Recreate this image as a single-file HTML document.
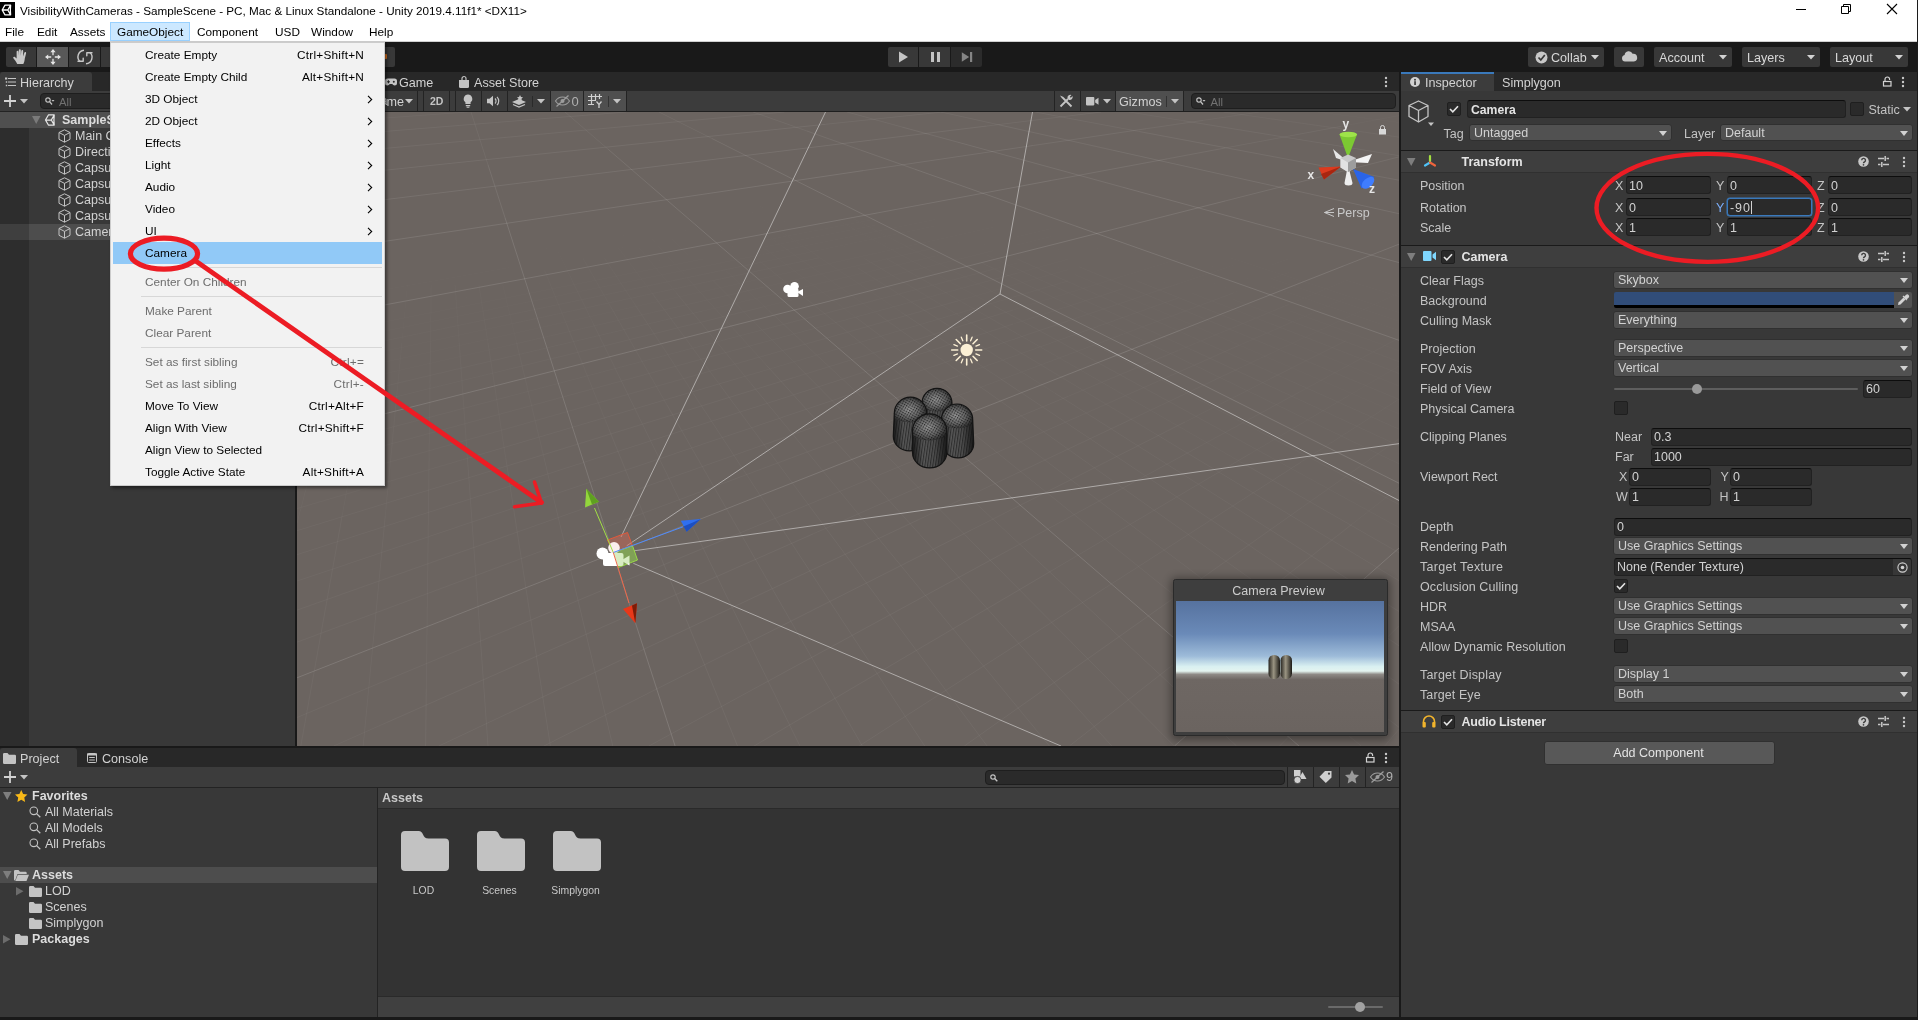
<!DOCTYPE html>
<html lang="en">
<head>
<meta charset="utf-8">
<title>Unity Editor</title>
<style>
*{box-sizing:border-box;margin:0;padding:0}
html,body{width:1918px;height:1020px;overflow:hidden;background:#383838}
body{position:relative;font-family:"Liberation Sans",sans-serif;font-size:12px;color:#d2d2d2;line-height:1}
.a{position:absolute}
.t{position:absolute;white-space:nowrap;line-height:16px;height:16px}
.w{font-family:"Liberation Sans",sans-serif;color:#000;font-size:12px}
.b{font-weight:bold}
.fld{position:absolute;background:#2a2a2a;border:1px solid #212121;border-top-color:#0d0d0d;border-radius:3px;height:18px}
.dd{position:absolute;background:#515151;border:1px solid #303030;border-radius:3px;height:18px}
.dd:after{content:"";position:absolute;right:4px;top:6px;border-left:4px solid transparent;border-right:4px solid transparent;border-top:5px solid #d2d2d2}
.ck{position:absolute;width:14px;height:14px;background:#2a2a2a;border:1px solid #1f1f1f;border-radius:2px}
.tb{position:absolute;background:#585858;border-radius:2px;height:20px;top:47px}
.sep{position:absolute;background:#232323;width:1px}
svg{position:absolute;overflow:visible}
</style>
</head>
<body>
<div id="root" style="position:absolute;left:0;top:0;width:1918px;height:1020px;will-change:transform">
<!-- ===== TITLE BAR ===== -->
<div class="a" id="titlebar" style="left:0;top:0;width:1918px;height:21px;background:#fff"></div>
<div class="a" style="left:0;top:2px;width:15px;height:16px;background:#000"></div>
<svg style="left:0;top:2px" width="15" height="16" viewBox="0 0 15 16"><path d="M10.60 12.85 5.00 12.85 2.20 8.00 5.00 3.15 10.60 3.15 10.32 8.00zM7.80 8.00L2.48 8.00M7.80 8.00L10.46 3.39M7.80 8.00L10.46 12.61" fill="none" stroke="#fff" stroke-width="1.3" stroke-linejoin="round"/></svg>
<div class="t w" style="left:20px;top:3px;font-size:11.7px">VisibilityWithCameras - SampleScene - PC, Mac &amp; Linux Standalone - Unity 2019.4.11f1* &lt;DX11&gt;</div>
<svg style="left:1790px;top:0" width="128" height="21" viewBox="0 0 128 21"><path d="M6 9.500h10" stroke="#000" stroke-width="1" fill="none"/><path d="M51.500 6.500h7v7h-7zM53.500 6.500v-2h7v7h-2" stroke="#000" stroke-width="1" fill="none"/><path d="M97 4l10 10M107 4l-10 10" stroke="#000" stroke-width="1.100" fill="none"/></svg>
<div class="a" id="menubar" style="left:0;top:21px;width:1918px;height:21px;background:#fff;border-bottom:1px solid #d0d0d0"></div>
<div class="a" style="left:110px;top:22px;width:80px;height:19px;background:#cce8ff;border:1px solid #99d1ff"></div>
<div class="t w" style="left:5px;top:23.6px;font-size:11.8px">File</div>
<div class="t w" style="left:37px;top:23.6px;font-size:11.8px">Edit</div>
<div class="t w" style="left:70px;top:23.6px;font-size:11.8px">Assets</div>
<div class="t w" style="left:117px;top:23.6px;font-size:11.8px">GameObject</div>
<div class="t w" style="left:197px;top:23.6px;font-size:11.8px">Component</div>
<div class="t w" style="left:275px;top:23.6px;font-size:11.8px">USD</div>
<div class="t w" style="left:311px;top:23.6px;font-size:11.8px">Window</div>
<div class="t w" style="left:369px;top:23.6px;font-size:11.8px">Help</div>
<!-- ===== MAIN TOOLBAR ===== -->
<div class="a" id="toolbar" style="left:0;top:42px;width:1918px;height:30px;background:#191919"></div>
<div class="tb" style="left:6px;width:30px;background:#383838;border-radius:2px 0 0 2px"></div>
<div class="tb" style="left:37px;width:31px;border-radius:0"></div>
<div class="tb" style="left:69px;width:31px;background:#383838;border-radius:0"></div>
<div class="tb" style="left:101px;width:31px;background:#383838;border-radius:0"></div>
<div class="tb" style="left:340px;width:55px;background:#383838"></div>
<div class="a" style="left:384px;top:54px;width:3px;height:5px;background:#d8701c;border-radius:1px"></div>
<!-- hand -->
<svg style="left:13px;top:49px" width="15" height="15" viewBox="0 0 15 15"><path d="M4.200 15C3 12.500 1.800 10.800.4 9.200-.3 8.300.9 7.200 1.900 8L3.600 9.600V2.800c0-1.300 1.800-1.300 1.900 0l.3 4V1.200c0-1.400 2-1.400 2 0V6.800l.5-4.900c.1-1.300 2-1.200 1.900.1L10 7.500l1.300-3.700c.4-1.200 2.100-.7 1.800.5L11.800 9.500c-.2 2.200-.6 3.800-1.500 5.500z" fill="#c8c8c8"/></svg>
<!-- move -->
<svg style="left:45px;top:49px" width="16" height="16" viewBox="0 0 16 16"><path d="M8 2v12M2 8h12" stroke="#e6e6e6" stroke-width="1.300" fill="none"/><path d="M8 0 10.600 3.200H5.400zM8 16 5.400 12.800h5.200zM0 8 3.200 5.400v5.200zM16 8 12.800 10.600V5.400z" fill="#e6e6e6"/><rect x="6.200" y="6.200" width="3.600" height="3.600" fill="#585858"/></svg>
<!-- rotate -->
<svg style="left:77px;top:49px" width="16" height="16" viewBox="0 0 16 16"><path d="M7 1.200A6.600 6.600 0 0 0 3.300 12.800M9 14.800A6.600 6.600 0 0 0 12.700 3.200" stroke="#c8c8c8" stroke-width="1.400" fill="none"/><path d="M1 12.200h5.200M6.200 12.200V9.200" stroke="#c8c8c8" stroke-width="1.400" fill="none" stroke-linecap="round"/><path d="M15 3.800H9.800M9.800 3.800V6.800" stroke="#c8c8c8" stroke-width="1.400" fill="none" stroke-linecap="round"/></svg>
<!-- play controls -->
<div class="tb" style="left:888px;width:30px;background:#383838;border-radius:2px 0 0 2px"></div>
<div class="tb" style="left:919px;width:31px;background:#383838;border-radius:0"></div>
<div class="tb" style="left:951px;width:31px;background:#2b2b2b;border-radius:0 2px 2px 0"></div>
<svg style="left:889px;top:47px" width="94" height="20" viewBox="0 0 94 20"><path d="M10 4.500v11l9-5.500z" fill="#c4c4c4"/><path d="M42 5h3v10h-3zM48 5h3v10h-3z" fill="#c4c4c4"/><path d="M72.800 5.200v9.600l7.400-4.800z" fill="#858585"/><path d="M81 5h2.200v10H81z" fill="#858585"/></svg>
<!-- right buttons -->
<div class="tb" style="left:1528px;width:76px;background:#383838"></div>
<div class="tb" style="left:1614px;width:30px;background:#383838"></div>
<div class="tb" style="left:1654px;width:78px;background:#383838"></div>
<div class="tb" style="left:1742px;width:78px;background:#383838"></div>
<div class="tb" style="left:1830px;width:78px;background:#383838"></div>
<svg style="left:1535px;top:51px" width="13" height="13" viewBox="0 0 13 13"><circle cx="6.500" cy="6.500" r="6" fill="#c8c8c8"/><path d="M3.500 6.500 5.800 9 9.800 4" stroke="#383838" stroke-width="1.700" fill="none"/></svg>
<div class="t" style="left:1551px;top:50px;font-size:12.6px;color:#d8d8d8">Collab</div>
<svg style="left:1591px;top:55px" width="9" height="5" viewBox="0 0 9 5"><path d="M0 0h8L4 4.500z" fill="#d2d2d2"/></svg>
<svg style="left:1621px;top:50px" width="17" height="13" viewBox="0 0 17 13"><path d="M4 11.500a3.300 3.300 0 0 1-.4-6.500 4.200 4.200 0 0 1 8-1.200 3.900 3.900 0 0 1 1.300 7.700z" fill="#c8c8c8"/></svg>
<div class="t" style="left:1659px;top:50px;font-size:12.6px;color:#d8d8d8">Account</div>
<svg style="left:1719px;top:55px" width="9" height="5" viewBox="0 0 9 5"><path d="M0 0h8L4 4.500z" fill="#d2d2d2"/></svg>
<div class="t" style="left:1747px;top:50px;font-size:12.6px;color:#d8d8d8">Layers</div>
<svg style="left:1807px;top:55px" width="9" height="5" viewBox="0 0 9 5"><path d="M0 0h8L4 4.500z" fill="#d2d2d2"/></svg>
<div class="t" style="left:1835px;top:50px;font-size:12.6px;color:#d8d8d8">Layout</div>
<svg style="left:1895px;top:55px" width="9" height="5" viewBox="0 0 9 5"><path d="M0 0h8L4 4.500z" fill="#d2d2d2"/></svg>
<!-- ===== HIERARCHY ===== -->
<div class="a" id="hier" style="left:0;top:72px;width:295px;height:674px;background:#383838"></div>
<div class="a" style="left:0;top:72px;width:295px;height:19px;background:#282828"></div>
<div class="a" style="left:0;top:72px;width:92px;height:19px;background:#3c3c3c;border-radius:3px 3px 0 0"></div>
<svg style="left:5px;top:77px" width="11" height="10" viewBox="0 0 11 10"><path d="M3 1.500h8M3 5h8M3 8.500h8" stroke="#c4c4c4" stroke-width="1.200" fill="none"/><path d="M0 .5h2.200v2H0zM.8 4.200h1.400v1.600H.8zM.8 7.700h1.400v1.600H.8z" fill="#c4c4c4"/></svg>
<div class="t" style="left:20px;top:75px;font-size:12.6px">Hierarchy</div>
<div class="a" style="left:0;top:91px;width:295px;height:20px;background:#3c3c3c"></div>
<div class="a" style="left:0;top:111px;width:295px;height:1px;background:#232323"></div>
<svg style="left:4px;top:95px" width="26" height="12" viewBox="0 0 26 12"><path d="M6 0v12M0 6h12" stroke="#d2d2d2" stroke-width="1.800" fill="none"/><path d="M16 4h8l-4 4.500z" fill="#c4c4c4"/></svg>
<div class="a" style="left:40px;top:93px;width:250px;height:16px;background:#2a2a2a;border:1px solid #1e1e1e;border-radius:4px"></div>
<svg style="left:45px;top:97px" width="10" height="9" viewBox="0 0 10 9"><circle cx="3" cy="3" r="2.200" stroke="#c4c4c4" stroke-width="1.200" fill="none"/><path d="M4.600 4.600 7 7.500" stroke="#c4c4c4" stroke-width="1.300"/><path d="M6.500 3h3l-1.500 1.800z" fill="#c4c4c4"/></svg>
<div class="t" style="left:59px;top:93.700px;font-size:11.300px;color:#727272">All</div>
<div class="a" style="left:0;top:128px;width:29px;height:618px;background:#2d2d2d"></div>
<div class="a" style="left:0;top:112px;width:295px;height:16px;background:#4f4f4f"></div>
<div class="a" style="left:0;top:224px;width:29px;height:16px;background:#3f3f3f"></div>
<div class="a" style="left:29px;top:224px;width:266px;height:16px;background:#4d4d4d"></div>
<svg style="left:32px;top:116px" width="9" height="8" viewBox="0 0 9 8"><path d="M0 0h8.500L4.200 8z" fill="#7a7a7a"/></svg>
<svg style="left:44px;top:113px" width="14" height="14" viewBox="0 0 14 14"><path d="M10.20 12.02 4.40 12.02 1.50 7.00 4.40 1.98 10.20 1.98 9.91 7.00zM7.30 7.00L1.79 7.00M7.30 7.00L10.05 2.23M7.30 7.00L10.05 11.77" fill="none" stroke="#e6e6e6" stroke-width="1.25" stroke-linejoin="round"/></svg>
<div class="t b" style="left:62px;top:112px;font-size:12.500px;color:#dcdcdc">SampleScene</div>
<svg style="left:58px;top:129px" width="13" height="14" viewBox="0 0 13 14"><path d="M6.500.8 12 3.500v6.800L6.500 13.200 1 10.300V3.500z M1 3.500 6.500 6.400 12 3.500M6.500 6.400v6.800" stroke="#c4c4c4" stroke-width="1" fill="none" stroke-linejoin="round"/></svg>
<div class="t" style="left:75px;top:128px;font-size:12.500px">Main Camera</div>
<svg style="left:58px;top:145px" width="13" height="14" viewBox="0 0 13 14"><path d="M6.500.8 12 3.500v6.800L6.500 13.200 1 10.300V3.500z M1 3.500 6.500 6.400 12 3.500M6.500 6.400v6.800" stroke="#c4c4c4" stroke-width="1" fill="none" stroke-linejoin="round"/></svg>
<div class="t" style="left:75px;top:144px;font-size:12.500px">Directional Light</div>
<svg style="left:58px;top:161px" width="13" height="14" viewBox="0 0 13 14"><path d="M6.500.8 12 3.500v6.800L6.500 13.200 1 10.300V3.500z M1 3.500 6.500 6.400 12 3.500M6.500 6.400v6.800" stroke="#c4c4c4" stroke-width="1" fill="none" stroke-linejoin="round"/></svg>
<div class="t" style="left:75px;top:160px;font-size:12.500px">Capsule</div>
<svg style="left:58px;top:177px" width="13" height="14" viewBox="0 0 13 14"><path d="M6.500.8 12 3.500v6.800L6.500 13.200 1 10.300V3.500z M1 3.500 6.500 6.400 12 3.500M6.500 6.400v6.800" stroke="#c4c4c4" stroke-width="1" fill="none" stroke-linejoin="round"/></svg>
<div class="t" style="left:75px;top:176px;font-size:12.500px">Capsule</div>
<svg style="left:58px;top:193px" width="13" height="14" viewBox="0 0 13 14"><path d="M6.500.8 12 3.500v6.800L6.500 13.200 1 10.300V3.500z M1 3.500 6.500 6.400 12 3.500M6.500 6.400v6.800" stroke="#c4c4c4" stroke-width="1" fill="none" stroke-linejoin="round"/></svg>
<div class="t" style="left:75px;top:192px;font-size:12.500px">Capsule</div>
<svg style="left:58px;top:209px" width="13" height="14" viewBox="0 0 13 14"><path d="M6.500.8 12 3.500v6.800L6.500 13.200 1 10.300V3.500z M1 3.500 6.500 6.400 12 3.500M6.500 6.400v6.800" stroke="#c4c4c4" stroke-width="1" fill="none" stroke-linejoin="round"/></svg>
<div class="t" style="left:75px;top:208px;font-size:12.500px">Capsule</div>
<svg style="left:58px;top:225px" width="13" height="14" viewBox="0 0 13 14"><path d="M6.500.8 12 3.500v6.800L6.500 13.200 1 10.300V3.500z M1 3.500 6.500 6.400 12 3.500M6.500 6.400v6.800" stroke="#c4c4c4" stroke-width="1" fill="none" stroke-linejoin="round"/></svg>
<div class="t" style="left:75px;top:224px;font-size:12.500px">Camera</div>
<!-- ===== SCENE ===== -->
<div class="a" id="scene" style="left:297px;top:72px;width:1102px;height:674px;background:#6b6460"></div>
<div class="a" style="left:297px;top:72px;width:1102px;height:19px;background:#282828"></div>
<div class="a" style="left:297px;top:72px;width:82px;height:19px;background:#3c3c3c;border-radius:3px 3px 0 0"></div>
<div class="a" style="left:297px;top:91px;width:1102px;height:20px;background:#3c3c3c"></div>
<div class="a" style="left:297px;top:111px;width:1102px;height:1px;background:#1f1f1f"></div>
<div class="t" style="left:316px;top:75px;font-size:12.6px">Scene</div>
<svg style="left:385px;top:77px" width="12" height="10" viewBox="0 0 12 10"><path d="M2.500 1.500h7a2.500 2.500 0 0 1 2.500 2.500v2a2.500 2.500 0 0 1-2.500 2.500c-1 0-1.500-1-2.300-1.500h-2.400c-.8.500-1.300 1.500-2.300 1.500A2.500 2.500 0 0 1 0 6V4a2.500 2.500 0 0 1 2.500-2.500z" fill="#c4c4c4"/><circle cx="8.800" cy="4.800" r="1" fill="#282828"/><path d="M2 4.800h3M3.500 3.300v3" stroke="#282828" stroke-width="1"/></svg>
<div class="t" style="left:399px;top:75px;font-size:12.6px">Game</div>
<svg style="left:459px;top:76px" width="10" height="12" viewBox="0 0 10 12"><path d="M0 4h10v6.500a1.500 1.500 0 0 1-1.500 1.500h-7A1.500 1.500 0 0 1 0 10.500z" fill="#c4c4c4"/><path d="M3 4V2.500a2 2 0 0 1 4 0V4" stroke="#c4c4c4" stroke-width="1.200" fill="none"/></svg>
<div class="t" style="left:474px;top:75px;font-size:12.6px">Asset Store</div>
<svg style="left:1384px;top:76px" width="4" height="12" viewBox="0 0 4 12"><circle cx="2" cy="2" r="1.200" fill="#c4c4c4"/><circle cx="2" cy="6" r="1.200" fill="#c4c4c4"/><circle cx="2" cy="10" r="1.200" fill="#c4c4c4"/></svg>
<!-- scene toolbar -->
<div class="t" style="left:300px;top:93px;font-size:12.6px">Shaded Wirefra</div>
<div class="t" style="left:386.400px;top:94px;font-size:12.6px">me</div>
<svg style="left:405px;top:99px" width="8" height="5" viewBox="0 0 8 5"><path d="M0 0h8L4 4.500z" fill="#c4c4c4"/></svg>
<div class="sep" style="left:417px;top:91px;height:20px"></div><div class="sep" style="left:423px;top:91px;height:20px"></div>
<div class="t b" style="left:430px;top:93px;font-size:10.500px;color:#c4c4c4">2D</div>
<div class="sep" style="left:449px;top:91px;height:20px"></div><div class="sep" style="left:455px;top:91px;height:20px"></div>
<svg style="left:463px;top:94px" width="10" height="14" viewBox="0 0 10 14"><path d="M5 .5a4.300 4.300 0 0 1 2.600 7.700V10H2.400V8.200A4.300 4.300 0 0 1 5 .5z" fill="#c4c4c4"/><path d="M2.800 11h4.400v1.200H2.800zM3.600 12.800h2.800v.9H3.600z" fill="#c4c4c4"/></svg>
<div class="sep" style="left:481px;top:91px;height:20px"></div>
<svg style="left:487px;top:95px" width="14" height="12" viewBox="0 0 14 12"><path d="M0 3.800h2.500L6 .8v10.400L2.500 8.200H0z" fill="#c4c4c4"/><path d="M8 3.500a3.500 3.500 0 0 1 0 5M10 1.800a6 6 0 0 1 0 8.400" stroke="#c4c4c4" stroke-width="1.200" fill="none"/></svg>
<div class="sep" style="left:507px;top:91px;height:20px"></div>
<svg style="left:512px;top:95px" width="14" height="12" viewBox="0 0 14 12"><path d="M0 7l7-3 7 3-7 3z" fill="#c4c4c4"/><path d="M1 9.500 7 12l6-2.500" stroke="#c4c4c4" stroke-width="1.200" fill="none"/><path d="M8 0l1 2 2 .3-1.500 1.400.4 2.100L8 4.800 6.100 5.800l.4-2.100L5 2.300 7 2z" fill="#c4c4c4"/></svg>
<div class="sep" style="left:532px;top:96px;height:11px;background:#2a2a2a"></div><svg style="left:537px;top:99px" width="8" height="5" viewBox="0 0 8 5"><path d="M0 0h8L4 4.500z" fill="#c4c4c4"/></svg>
<div class="sep" style="left:550px;top:91px;height:20px"></div>
<div class="a" style="left:551px;top:91px;width:32px;height:20px;background:#4f4f4f"></div>
<svg style="left:555px;top:95px" width="15" height="12" viewBox="0 0 15 12"><path d="M.5 6C2.500 2.800 5 2 7.500 2S12.500 2.800 14.500 6C12.500 9.200 10 10 7.500 10S2.500 9.200.5 6z" stroke="#9c9c9c" stroke-width="1.200" fill="none"/><circle cx="7.500" cy="6" r="2" fill="#9c9c9c"/><path d="M1.500 11.500 13.500.5" stroke="#9c9c9c" stroke-width="1.300"/></svg>
<div class="t" style="left:571.500px;top:93.500px;font-size:13px;color:#b0b0b0">0</div>
<div class="sep" style="left:583px;top:91px;height:20px"></div>
<div class="a" style="left:584px;top:91px;width:42px;height:20px;background:#4f4f4f"></div>
<svg style="left:588px;top:94px" width="15" height="14" viewBox="0 0 15 14"><path d="M3.500 0v11M7.500 0v6M11.500 0v5M0 2.500h14M0 6.500h8M0 10.500h6" stroke="#d0d0d0" stroke-width="1.200" fill="none"/><path d="M8.500 7.500 11 10.500 13.500 7.500M11 10.500V14" stroke="#d0d0d0" stroke-width="1.300" fill="none"/></svg>
<div class="sep" style="left:608px;top:96px;height:11px;background:#333"></div>
<svg style="left:613px;top:99px" width="8" height="5" viewBox="0 0 8 5"><path d="M0 0h8L4 4.500z" fill="#c4c4c4"/></svg>
<div class="sep" style="left:626px;top:91px;height:20px"></div>
<div class="sep" style="left:1054px;top:91px;height:20px"></div>
<svg style="left:1059px;top:94px" width="14" height="14" viewBox="0 0 14 14"><path d="M1.500 12.500 9 5M12.500 12.500 4 4" stroke="#c4c4c4" stroke-width="1.800" fill="none"/><path d="M1 1.500 4.500 3 5 5 3 4.500z" fill="#c4c4c4"/><path d="M8.500 4.500a3 3 0 0 1 4-3.500L10.800 2.700l1 1L13.500 2a3 3 0 0 1-3.500 4z" fill="#c4c4c4"/></svg>
<div class="sep" style="left:1080px;top:91px;height:20px"></div>
<svg style="left:1086px;top:97px" width="12.500" height="8.500" viewBox="0 0 15 10"><rect x="0" y="0" width="10" height="10" rx="1" fill="#c4c4c4"/><path d="M11 3.500 15 .8v8.400L11 6.500z" fill="#c4c4c4"/></svg>
<svg style="left:1103px;top:99px" width="8" height="5" viewBox="0 0 8 5"><path d="M0 0h8L4 4.500z" fill="#c4c4c4"/></svg>
<div class="sep" style="left:1115px;top:91px;height:20px"></div>
<div class="a" style="left:1116px;top:91px;width:67px;height:20px;background:#4f4f4f"></div>
<div class="t" style="left:1119px;top:94px;font-size:12.6px">Gizmos</div>
<div class="sep" style="left:1166px;top:96px;height:11px;background:#333"></div>
<svg style="left:1171px;top:99px" width="8" height="5" viewBox="0 0 8 5"><path d="M0 0h8L4 4.500z" fill="#c4c4c4"/></svg>
<div class="sep" style="left:1183px;top:91px;height:20px"></div>
<div class="a" style="left:1191px;top:93px;width:205px;height:16px;background:#2a2a2a;border:1px solid #1e1e1e;border-radius:4px"></div>
<svg style="left:1196px;top:97px" width="10" height="9" viewBox="0 0 10 9"><circle cx="3" cy="3" r="2.200" stroke="#c4c4c4" stroke-width="1.200" fill="none"/><path d="M4.600 4.600 7 7.500" stroke="#c4c4c4" stroke-width="1.300"/><path d="M6.500 3h3l-1.500 1.800z" fill="#c4c4c4"/></svg>
<div class="t" style="left:1210.500px;top:93.700px;font-size:11.300px;color:#727272">All</div>
<!-- scene viewport drawing -->
<svg id="vp" style="left:297px;top:112px;overflow:hidden" width="1102" height="634" viewBox="297 112 1102 634">
<g id="grid" fill="none" stroke="#fff" stroke-width="1"><path stroke-opacity="0.008" d="M1344.6 279.7L1399.0 296.5M1288.4 269.3L1399.0 304.3M649.6 231.1L355.8 280.7M1230.5 257.9L1399.0 312.6M749.0 219.5L297.0 297.8M1190.0 251.5L1399.0 321.3M755.7 223.9L297.0 305.2M1133.8 239.5L1399.0 330.5M819.0 218.1L297.0 313.0M1071.3 231.4L1289.8 310.9M877.0 218.8L297.0 330.0M1066.6 236.9L1232.8 299.3M877.0 224.8L703.0 259.1M355.0 327.7L297.0 339.1M1036.0 232.7L1191.6 293.0M935.0 219.5L761.0 254.8M978.4 217.4L1136.1 280.6M935.0 226.0L819.0 250.2M972.6 222.5L1079.2 266.8M993.0 220.4L819.0 257.8M966.8 228.1L1074.8 274.5M993.0 227.3L877.0 253.0M906.2 209.6L1015.7 258.4M1051.0 221.3L935.0 247.9M935.4 231.2L986.9 255.1M1051.0 228.7L935.0 256.1M877.2 212.5L981.5 262.8M1051.0 236.6L993.0 250.8M849.5 216.6L899.4 242.8M1109.0 238.9L993.0 269.4M842.6 222.8L893.1 250.5M1123.5 244.1L1068.4 259.2M835.7 229.6L886.9 258.9M1178.6 238.3L1068.4 269.5M815.8 229.2L864.4 258.5M1178.6 248.2L1068.4 280.8M759.6 205.7L857.9 268.1M1178.6 259.0L1123.5 276.0M751.9 212.1L801.7 245.4M1233.7 253.0L1123.5 288.5M735.4 213.0L782.8 246.6M1233.7 265.1L1178.6 283.7M719.7 214.6L765.0 248.7M1288.8 258.8L1178.6 297.8M713.3 223.9L759.6 261.2M1288.8 272.4L1233.7 292.9M683.3 230.9L725.8 270.5M1343.9 281.5L1288.8 304.4M671.8 238.8L713.7 281.1M1345.7 298.2L1292.5 321.8M651.8 238.8L690.1 281.1M1399.0 292.9L1345.7 318.1M1399.0 313.8L1345.6 340.8M541.5 217.7L567.3 270.5M489.0 227.3L502.8 284.9M470.0 227.3L478.9 284.9M407.4 284.9L401.9 342.5M383.5 284.9L373.2 342.5M364.6 266.2L351.1 317.7M329.9 302.0L313.5 349.5M319.3 267.8L297.0 319.7"/><path stroke-opacity="0.017" d="M1289.8 310.9L1399.0 350.7M1232.8 299.3L1399.0 361.7M703.0 259.1L355.0 327.7M1191.6 293.0L1399.0 373.5M761.0 254.8L297.0 348.8M1136.1 280.6L1399.0 386.0M819.0 250.2L297.0 359.1M1079.2 266.8L1399.0 399.4M819.0 257.8L297.0 369.9M1074.8 274.5L1399.0 413.8M877.0 253.0L297.0 381.5M1015.7 258.4L1289.5 380.4M935.0 247.9L297.0 393.8M986.9 255.1L1193.0 350.4M935.0 256.1L703.0 311.0M355.0 393.2L297.0 406.9M981.5 262.8L1138.1 338.1M993.0 250.8L761.0 307.5M899.4 242.8L1049.3 321.3M993.0 269.4L877.0 299.8M893.1 250.5L994.3 305.9M1068.4 259.2L903.1 304.2M886.9 258.9L989.3 317.7M1068.4 269.5L958.2 300.8M864.4 258.5L961.6 317.1M1068.4 280.8L958.2 313.3M857.9 268.1L907.1 299.3M1123.5 276.0L1013.3 309.9M801.7 245.4L901.3 312.2M1123.5 288.5L1013.3 324.0M782.8 246.6L877.6 313.9M1178.6 283.7L1068.4 320.8M765.0 248.7L855.5 317.1M1178.6 297.8L1123.5 317.3M759.6 261.2L805.9 298.5M1233.7 292.9L1123.5 334.0M725.8 270.5L768.4 310.1M1288.8 304.4L1178.6 350.3M713.7 281.1L755.5 323.3M1292.5 321.8L1239.2 345.3M690.1 281.1L728.5 323.3M1345.7 318.1L1239.0 368.4M639.3 247.9L676.5 293.1M1345.6 340.8L1292.1 367.8M618.5 247.9L652.0 293.1M1399.0 337.9L1299.0 392.3M604.6 258.3L636.6 307.1M1399.0 366.0L1349.4 395.2M583.0 258.3L610.9 307.1M567.3 270.5L593.1 323.3M544.7 270.5L566.1 323.3M502.8 284.9L516.5 342.5M478.9 284.9L487.9 342.5M455.1 284.9L459.2 342.5M431.2 284.9L430.5 342.5M401.9 342.5L396.3 400.2M373.2 342.5L362.9 400.2M351.1 317.7L324.0 420.5M313.5 349.5L297.0 397.0"/><path stroke-opacity="0.025" d="M1289.5 380.4L1399.0 429.2M1193.0 350.4L1399.0 445.8M703.0 311.0L355.0 393.2M1138.1 338.1L1399.0 463.8M761.0 307.5L297.0 421.0M1049.3 321.3L1399.0 504.4M877.0 299.8L297.0 452.1M994.3 305.9L1399.0 527.5M903.1 304.2L297.0 469.5M989.3 317.7L1245.4 464.7M958.2 300.8L297.0 488.2M961.6 317.1L1156.0 434.2M958.2 313.3L737.8 378.4M462.3 459.8L297.0 508.6M907.1 299.3L1054.7 393.0M1013.3 309.9L792.9 377.8M901.3 312.2L1000.8 378.9M1013.3 324.0L848.0 377.3M877.6 313.9L972.4 381.2M1068.4 320.8L903.1 376.6M855.5 317.1L946.1 385.5M1123.5 317.3L958.2 375.9M805.9 298.5L898.4 373.1M1123.5 334.0L958.2 395.7M768.4 310.1L853.5 389.4M1178.6 350.3L1068.4 396.2M755.5 323.3L797.4 365.6M1239.2 345.3L1079.4 416.0M728.5 323.3L766.8 365.6M1239.0 368.4L1132.3 418.8M676.5 293.1L751.1 383.7M1292.1 367.8L1185.2 421.9M652.0 293.1L719.0 383.7M1299.0 392.3L1199.0 446.7M636.6 307.1L700.6 404.6M1349.4 395.2L1250.2 453.7M610.9 307.1L666.8 404.6M1399.0 399.1L1300.9 462.2M593.1 323.3L619.0 376.2M1399.0 438.9L1302.4 507.1M566.1 323.3L608.9 429.0M1399.0 487.4L1351.9 524.3M516.5 342.5L544.0 457.8M487.9 342.5L505.7 457.8M459.2 342.5L467.4 457.8M430.5 342.5L429.1 457.8M396.3 400.2L385.3 515.5M362.9 400.2L342.2 515.5M324.0 420.5L297.0 523.3"/><path stroke-opacity="0.034" d="M1245.4 464.7L1399.0 552.8M1156.0 434.2L1399.0 580.7M737.8 378.4L462.3 459.8M1054.7 393.0L1399.0 611.5M792.9 377.8L297.0 530.7M1000.8 378.9L1399.0 645.8M848.0 377.3L297.0 554.7M972.4 381.2L1399.0 684.1M903.1 376.6L297.0 581.1M946.1 385.5L1399.0 727.3M958.2 375.9L297.0 610.1M898.4 373.1L1361.4 746.0M958.2 395.7L297.0 642.2M853.5 389.4L1023.8 547.9M1068.4 396.2L737.8 533.9M517.4 625.7L297.0 717.5M797.4 365.6L964.9 534.7M1079.4 416.0L813.1 533.9M387.0 722.4L333.8 746.0M766.8 365.6L920.1 534.7M1132.3 418.8L918.9 519.5M751.1 383.7L863.0 519.6M1185.2 421.9L971.5 529.9M719.0 383.7L819.5 519.6M1199.0 446.7L999.0 555.5M700.6 404.6L796.6 550.9M1250.2 453.7L1051.8 570.6M666.8 404.6L750.6 550.9M1300.9 462.2L1104.6 588.3M619.0 376.2L696.5 534.7M1302.4 507.1L1157.5 609.5M608.9 429.0L651.8 534.7M1351.9 524.3L1210.7 635.2M544.0 457.8L571.5 573.1M1399.0 625.7L1319.4 705.9M505.7 457.8L532.5 630.7M1399.0 729.2L1384.7 746.0M467.4 457.8L479.8 630.7M429.1 457.8L426.3 688.4M385.3 515.5L363.2 746.0M342.2 515.5L300.8 746.0"/><path stroke-opacity="0.042" d="M1023.8 547.9L1236.6 746.0M737.8 533.9L517.4 625.7M964.9 534.7L1174.2 746.0M813.1 533.9L387.0 722.4M920.1 534.7L1111.8 746.0M918.9 519.5L438.9 746.0M863.0 519.6L1049.4 746.0M971.5 529.9L543.9 746.0M819.5 519.6L987.1 746.0M999.0 555.5L649.0 746.0M796.6 550.9L924.7 746.0M1051.8 570.6L754.1 746.0M750.6 550.9L862.3 746.0M1104.6 588.3L859.2 746.0M696.5 534.7L799.9 746.0M1157.5 609.5L964.3 746.0M651.8 534.7L737.5 746.0M1210.7 635.2L1069.4 746.0M571.5 573.1L612.8 746.0M1319.4 705.9L1279.6 746.0M532.5 630.7L550.4 746.0M479.8 630.7L488.0 746.0M426.3 688.4L425.6 746.0"/><path stroke-opacity="0.017" d="M309.1 112.0L297.0 112.8M1317.3 112.0L1399.0 122.4M1399.0 115.6L1341.0 126.4"/><path stroke-opacity="0.034" d="M467.6 112.0L297.0 124.4M1223.2 112.0L1399.0 137.1M351.8 134.1L297.0 138.5M1129.2 112.0L1183.2 120.7M1259.6 112.0L1203.0 120.4"/><path stroke-opacity="0.051" d="M626.0 112.0L351.8 134.1M1183.2 120.7L1399.0 155.7M784.4 112.0L297.0 156.4M1035.2 112.0L1139.1 131.5M942.8 112.0L825.4 124.3M941.1 112.0L998.4 124.7M1101.2 112.0L986.3 126.1M847.1 112.0L902.3 127.1M1203.0 120.4L1146.4 128.7M753.1 112.0L806.9 131.0M1341.0 126.4L1225.0 148.0M659.0 112.0L711.9 138.5M565.0 112.0L608.2 149.3M471.0 112.0L488.0 164.8M376.9 112.0L350.3 163.9"/><path stroke-opacity="0.068" d="M1139.1 131.5L1399.0 180.2M825.4 124.3L297.0 179.4M998.4 124.7L1112.8 150.2M986.3 126.1L871.4 140.1M902.3 127.1L957.5 142.1M1146.4 128.7L1033.1 145.5M806.9 131.0L860.7 150.1M1225.0 148.0L1167.0 158.9M1399.0 156.9L1341.0 171.6"/><path stroke-opacity="0.084" d="M1112.8 150.2L1399.0 213.7M871.4 140.1L297.0 210.4M957.5 142.1L1123.1 187.3M1033.1 145.5L863.3 170.6M860.7 150.1L914.6 169.1M1167.0 158.9L1051.0 180.5M711.9 138.5L764.7 165.0M1341.0 171.6L1225.0 201.0M608.2 149.3L651.3 186.6M488.0 164.8L505.0 217.7M350.3 163.9L323.6 215.7"/><path stroke-opacity="0.101" d="M1123.1 187.3L1399.0 262.6M863.3 170.6L297.0 254.3M914.6 169.1L1076.0 226.2M1051.0 180.5L877.0 213.0M764.7 165.0L870.5 218.1M1225.0 201.0L1109.0 230.4M651.3 186.6L694.5 223.9M1399.0 244.2L1343.9 265.8M323.6 215.7L297.0 267.6"/><path stroke-opacity="0.118" d="M1076.0 226.2L1399.0 340.3M877.0 213.0L297.0 321.3M870.5 218.1L1029.0 297.6M1109.0 230.4L877.0 289.1M694.5 223.9L780.9 298.5M1343.9 265.8L1178.6 330.9M505.0 217.7L539.0 323.3"/><path stroke-opacity="0.135" d="M1029.0 297.6L1399.0 483.2M877.0 289.1L297.0 436.0M780.9 298.5L1299.0 746.0M1178.6 330.9L297.0 677.8M539.0 323.3L675.1 746.0M1399.0 548.0L1174.5 746.0"/></g>
<g id="frustum" stroke="#ffffff" stroke-width="1" fill="none" stroke-opacity=".46">
<path d="M621 537 825.500 112"/><path d="M626.700 545.800 1000 294"/><path d="M634 550.800 1400 443.500"/><path d="M633.300 563.300 1061 746"/>
<path d="M1000 294 1032.500 112"/><path d="M1000 294 1400 501"/>
</g>
<defs>
<linearGradient id="capb" x1="0" x2="1" y1="0" y2="0"><stop offset="0" stop-color="#1c1c1c"/><stop offset=".3" stop-color="#585858"/><stop offset=".65" stop-color="#4e4e4e"/><stop offset="1" stop-color="#1a1a1a"/></linearGradient>
<radialGradient id="capt" cx=".45" cy=".5" r=".6"><stop offset="0" stop-color="#949494"/><stop offset=".55" stop-color="#646464"/><stop offset="1" stop-color="#222222"/></radialGradient>
<pattern id="dots" width="2.500" height="2.500" patternUnits="userSpaceOnUse" patternTransform="rotate(30)"><rect width="1.300" height="1.300" fill="#080808" fill-opacity=".72"/></pattern><pattern id="stripes" width="2.600" height="6" patternUnits="userSpaceOnUse" patternTransform="rotate(8)"><rect width="1.100" height="6" fill="#0e0e0e" fill-opacity=".55"/></pattern>
<linearGradient id="sky" x1="0" x2="0" y1="0" y2="1"><stop offset="0" stop-color="#56729f"/><stop offset=".25" stop-color="#6a8ab8"/><stop offset=".42" stop-color="#9dbbd9"/><stop offset=".5" stop-color="#d9f0f1"/><stop offset=".535" stop-color="#e4f4f0"/><stop offset=".56" stop-color="#8e8a86"/><stop offset=".6" stop-color="#6e6763"/><stop offset="1" stop-color="#6b6460"/></linearGradient>
<linearGradient id="pcap" x1="0" x2="1" y1="0" y2="0"><stop offset="0" stop-color="#26241f"/><stop offset=".45" stop-color="#9a9482"/><stop offset="1" stop-color="#1c1a16"/></linearGradient>
</defs>
<g id="objs">
<path d="M922 403.3a15.0 15.0 0 0 1 30 0L952 427.0a15.0 13.5 0 0 1 -30 0z" fill="url(#capb)"/><path d="M922 403.3a15.0 15.0 0 0 1 30 0L952 427.0a15.0 13.5 0 0 1 -30 0z" fill="url(#stripes)"/><path d="M922 403.3a15.0 15.0 0 0 1 30 0V407.8q-15.0 7.5 -30 0z" fill="url(#capt)"/><path d="M922 403.3a15.0 15.0 0 0 1 30 0V407.8q-15.0 7.5 -30 0z" fill="url(#dots)"/><path d="M922 403.3a15.0 15.0 0 0 1 30 0L952 427.0a15.0 13.5 0 0 1 -30 0z" fill="none" stroke="#141414" stroke-width="1.200"/><path d="M894.3 413.40000000000003a16.200000000000045 16.200000000000045 0 0 1 32.40000000000009 0L925.7 436.29999999999995a16.200000000000045 14.6 0 0 1 -32.40000000000009 0z" fill="url(#capb)"/><path d="M894.3 413.40000000000003a16.200000000000045 16.200000000000045 0 0 1 32.40000000000009 0L925.7 436.29999999999995a16.200000000000045 14.6 0 0 1 -32.40000000000009 0z" fill="url(#stripes)"/><path d="M894.3 413.40000000000003a16.200000000000045 16.200000000000045 0 0 1 32.40000000000009 0V418.3q-16.200000000000045 8.1 -32.40000000000009 0z" fill="url(#capt)"/><path d="M894.3 413.40000000000003a16.200000000000045 16.200000000000045 0 0 1 32.40000000000009 0V418.3q-16.200000000000045 8.1 -32.40000000000009 0z" fill="url(#dots)"/><path d="M894.3 413.40000000000003a16.200000000000045 16.200000000000045 0 0 1 32.40000000000009 0L925.7 436.29999999999995a16.200000000000045 14.6 0 0 1 -32.40000000000009 0z" fill="none" stroke="#141414" stroke-width="1.200"/><path d="M941.4 419.65000000000003a15.650000000000034 15.650000000000034 0 0 1 31.300000000000068 0L973.7 443.74999999999994a15.650000000000034 14.1 0 0 1 -31.300000000000068 0z" fill="url(#capb)"/><path d="M941.4 419.65000000000003a15.650000000000034 15.650000000000034 0 0 1 31.300000000000068 0L973.7 443.74999999999994a15.650000000000034 14.1 0 0 1 -31.300000000000068 0z" fill="url(#stripes)"/><path d="M941.4 419.65000000000003a15.650000000000034 15.650000000000034 0 0 1 31.300000000000068 0V424.3q-15.650000000000034 7.8 -31.300000000000068 0z" fill="url(#capt)"/><path d="M941.4 419.65000000000003a15.650000000000034 15.650000000000034 0 0 1 31.300000000000068 0V424.3q-15.650000000000034 7.8 -31.300000000000068 0z" fill="url(#dots)"/><path d="M941.4 419.65000000000003a15.650000000000034 15.650000000000034 0 0 1 31.300000000000068 0L973.7 443.74999999999994a15.650000000000034 14.1 0 0 1 -31.300000000000068 0z" fill="none" stroke="#141414" stroke-width="1.200"/><path d="M912.5 430.95a17.149999999999977 17.149999999999977 0 0 1 34.299999999999955 0L946.8 452.55a17.149999999999977 15.4 0 0 1 -34.299999999999955 0z" fill="url(#capb)"/><path d="M912.5 430.95a17.149999999999977 17.149999999999977 0 0 1 34.299999999999955 0L946.8 452.55a17.149999999999977 15.4 0 0 1 -34.299999999999955 0z" fill="url(#stripes)"/><path d="M912.5 430.95a17.149999999999977 17.149999999999977 0 0 1 34.299999999999955 0V436.1q-17.149999999999977 8.6 -34.299999999999955 0z" fill="url(#capt)"/><path d="M912.5 430.95a17.149999999999977 17.149999999999977 0 0 1 34.299999999999955 0V436.1q-17.149999999999977 8.6 -34.299999999999955 0z" fill="url(#dots)"/><path d="M912.5 430.95a17.149999999999977 17.149999999999977 0 0 1 34.299999999999955 0L946.8 452.55a17.149999999999977 15.4 0 0 1 -34.299999999999955 0z" fill="none" stroke="#141414" stroke-width="1.200"/>
<!-- sun -->
<g stroke="#fbefd4" stroke-width="1.600" stroke-linecap="round"><circle cx="966.700" cy="350" r="6.200" fill="#fbefd4" stroke="none"/>
<path d="M966.700 335v6M966.700 359v6M951.700 350h6M975.700 350h6M956.200 339.500l4.200 4.200M973 356.300l4.200 4.200M956.200 360.500l4.200-4.200M973 343.700l4.200-4.200"/>
<path d="M961.300 337.200l1.500 3.600M970.600 359.200l1.500 3.600M953.900 344.600l3.600 1.500M975.900 353.900l3.600 1.500M953.900 355.400l3.600-1.500M975.900 346.100l3.600-1.500M961.300 362.800l1.500-3.600M970.600 340.800l1.500-3.600" stroke-width="1.300"/></g>
<!-- main camera icon -->
<g fill="#fff"><circle cx="787.500" cy="289" r="4.300"/><circle cx="794.500" cy="286.300" r="4.300"/><rect x="787.500" y="288.500" width="11" height="8.500" rx="1.500"/><path d="M797 292 803 289v7z"/></g>
<!-- move gizmo -->
<path d="M607.500 540 627.500 532.500 632.500 545.800 613.300 552.500z" fill="#e06a55" fill-opacity=".4" stroke="#e4583a" stroke-width="1"/>
<path d="M613.300 552.500 632.500 545.800 637.500 560 618.300 567.500z" fill="#8fc850" fill-opacity=".4" stroke="#9bdc46" stroke-width="1"/>
<g fill="#fff"><circle cx="602.500" cy="553.500" r="6"/><circle cx="614" cy="547.800" r="5.800" fill="#fbeeee"/><rect x="603" y="553" width="20.500" height="13" rx="2"/><path d="M621 560.500 629.500 555.500v10z"/></g>
<path d="M613.300 552.500 632.500 545.800 637.500 560 618.300 567.500z" fill="#8fc850" fill-opacity=".35"/>
<path d="M613.300 552.500 594.500 508" stroke="#a2e046" stroke-width="1"/><path d="M586.300 488.700 585 507.500 599 501.700z" fill="#93d63c"/><path d="M586.300 488.700 592 504.500 599 501.700z" fill="#5fa020"/>
<path d="M613.300 552.500 683 526.800" stroke="#4f8cff" stroke-width="1"/><path d="M700.800 519 680.800 520.800 686.700 531.700z" fill="#2f6ff0"/><path d="M700.800 519 683.500 526.500 686.700 531.700z" fill="#1d4fc0"/>
<path d="M613.300 552.500 629 603" stroke="#f0684a" stroke-width="1"/><path d="M635.300 623.300 623 609 637 603.300z" fill="#e8381a"/><path d="M635.300 623.300 632 605.500 637 603.300z" fill="#7c1c08"/>
<!-- orientation gizmo -->
<g>
<path d="M1348 162 1333 149 1336 158z" fill="#e8e8e8"/><path d="M1348 162 1372 154 1368 163z" fill="#f4f4f4"/><path d="M1348 165 1344.500 183a4 2.500 0 0 0 8 0z" fill="#eeeeee"/>
<path d="M1348 158 1339.500 134.500a9 3 0 0 1 17.500 0z" fill="#7cc932"/><ellipse cx="1348.300" cy="134.500" rx="8.800" ry="2.800" fill="#9ee34a"/>
<path d="M1341 166.500 1318.500 167.500 1324 179.500z" fill="#dc3a1e"/><path d="M1341 166.500 1321 174 1324 179.500z" fill="#a82610"/>
<path d="M1353 169 1361.500 188.500 1374.500 177z" fill="#2a64e8"/><ellipse cx="1368" cy="182.800" rx="7.500" ry="4.500" transform="rotate(-42 1368 182.800)" fill="#3f7dff"/>
<path d="M1340.500 158 1348 154.500 1356 158v9.500L1348 172l-7.500-4.500z" fill="#c9c9c9"/><path d="M1348 162.500 1356 158v9.500L1348 172z" fill="#9d9d9d"/><path d="M1340.500 158 1348 162.500V172l-7.500-4.500z" fill="#e2e2e2"/>
</g>
<text x="1342.500" y="128" font-family="Liberation Sans,sans-serif" font-size="12" font-weight="bold" fill="#e6e6e6">y</text>
<text x="1307.500" y="179" font-family="Liberation Sans,sans-serif" font-size="12" font-weight="bold" fill="#e6e6e6">x</text>
<text x="1369" y="193" font-family="Liberation Sans,sans-serif" font-size="12" font-weight="bold" fill="#e6e6e6">z</text>
<path d="M1334 208.500 1324.500 212.500 1334 216.500M1324.500 212.500H1334" stroke="#c8c8c8" stroke-width="1" fill="none"/>
<text x="1337" y="217" font-family="Liberation Sans,sans-serif" font-size="12.500" fill="#c8c8c8">Persp</text>
<path d="M1379 129h7v5.500h-7z" fill="#d8d8d8"/><path d="M1380.500 129v-1.500a2 2 0 0 1 4 0V129" stroke="#d8d8d8" stroke-width="1" fill="none"/>
<!-- camera preview -->
<filter id="blur" x="-20%" y="-20%" width="140%" height="140%"><feGaussianBlur stdDeviation="5"/></filter><rect x="1171" y="578" width="219" height="162" rx="4" fill="#000" fill-opacity=".38" filter="url(#blur)"/><rect x="1173.500" y="579.500" width="214" height="156" rx="2" fill="#3e3e3e" stroke="#2a2a2a"/>
<text x="1278.500" y="595" text-anchor="middle" font-family="Liberation Sans,sans-serif" font-size="12.500" fill="#cccccc">Camera Preview</text>
<rect x="1176" y="601" width="208" height="131" fill="url(#sky)"/>
<rect x="1268.500" y="655" width="11.500" height="24" rx="5.500" fill="url(#pcap)"/><rect x="1280.500" y="655" width="11.500" height="24" rx="5.500" fill="url(#pcap)"/>
</g>
</svg>
<!-- ===== PROJECT ===== -->
<div class="a" id="proj" style="left:0;top:748px;width:1399px;height:269px;background:#383838"></div>
<div class="a" style="left:0;top:748px;width:1399px;height:19px;background:#282828"></div>
<div class="a" style="left:0;top:748px;width:77px;height:19px;background:#3c3c3c;border-radius:3px 3px 0 0"></div>
<svg style="left:3px;top:753px" width="13" height="11" viewBox="0 0 13 11"><path d="M0 1.200A1.200 1.200 0 0 1 1.200 0h3.300l1.500 1.800h5.800A1.200 1.200 0 0 1 13 3v6.800A1.200 1.200 0 0 1 11.800 11H1.200A1.200 1.200 0 0 1 0 9.800z" fill="#c4c4c4"/></svg>
<div class="t" style="left:20px;top:750.5px;font-size:12.5px;font-size:12.6px">Project</div>
<svg style="left:87px;top:753px" width="10" height="10" viewBox="0 0 10 10"><rect x=".5" y=".5" width="9" height="9" rx="1" fill="none" stroke="#c4c4c4" stroke-width="1"/><path d="M0 1.500h10" stroke="#c4c4c4" stroke-width="2"/><path d="M2.200 4.500h5.600M2.200 7h5.600" stroke="#c4c4c4" stroke-width="1"/></svg>
<div class="t" style="left:102px;top:750.5px;font-size:12.5px;font-size:12.6px">Console</div>
<svg style="left:1366px;top:752px" width="9" height="11" viewBox="0 0 9 11"><rect x=".5" y="5.500" width="7.500" height="4.500" fill="none" stroke="#d2d2d2" stroke-width="1.200"/><path d="M2 5.500V3.300a2.300 2.300 0 0 1 4.600 0v.7" stroke="#d2d2d2" stroke-width="1.200" fill="none"/></svg>
<svg style="left:1384px;top:752px" width="4" height="12" viewBox="0 0 4 12"><circle cx="2" cy="2" r="1.200" fill="#c8c8c8"/><circle cx="2" cy="6" r="1.200" fill="#c8c8c8"/><circle cx="2" cy="10" r="1.200" fill="#c8c8c8"/></svg>
<div class="a" style="left:0;top:767px;width:1399px;height:20px;background:#3c3c3c"></div>
<div class="a" style="left:0;top:787px;width:1399px;height:1px;background:#232323"></div>
<svg style="left:4px;top:771px" width="26" height="12" viewBox="0 0 26 12"><path d="M6 0v12M0 6h12" stroke="#d2d2d2" stroke-width="1.800" fill="none"/><path d="M16 4h8l-4 4.500z" fill="#c4c4c4"/></svg>
<div class="a" style="left:985px;top:770px;width:300px;height:15px;background:#2a2a2a;border:1px solid #1e1e1e;border-radius:4px"></div>
<svg style="left:990px;top:773.500px" width="8" height="8" viewBox="0 0 8 8"><circle cx="3" cy="3" r="2.200" stroke="#c4c4c4" stroke-width="1.200" fill="none"/><path d="M4.600 4.600 7.300 7.300" stroke="#c4c4c4" stroke-width="1.400"/></svg>
<div class="sep" style="left:1287px;top:767px;height:20px"></div>
<div class="sep" style="left:1313px;top:767px;height:20px"></div>
<div class="sep" style="left:1339px;top:767px;height:20px"></div>
<div class="sep" style="left:1365px;top:767px;height:20px"></div>
<svg style="left:1293px;top:770px" width="14" height="14" viewBox="0 0 14 14"><rect x="1" y="0" width="6.500" height="6.500" fill="#d0d0d0"/><path d="M9.500 2 13.500 9h-8z" fill="#d0d0d0"/><circle cx="4.500" cy="10" r="3.600" fill="#d0d0d0" stroke="#3c3c3c" stroke-width=".8"/></svg>
<svg style="left:1319px;top:771px" width="13" height="12" viewBox="0 0 13 12"><path d="M6 0h6.500v6.500L6.800 12 .5 5.800z" fill="#d0d0d0"/><circle cx="10" cy="2.700" r="1.100" fill="#3c3c3c"/></svg>
<svg style="left:1345px;top:770px" width="14" height="13" viewBox="0 0 14 13"><path d="M7 0l2.100 4.500 4.900.6-3.600 3.400.9 4.900L7 11l-4.300 2.400.9-4.900L0 5.100l4.900-.6z" fill="#9a9a9a"/></svg>
<svg style="left:1370px;top:771px" width="15" height="12" viewBox="0 0 15 12"><path d="M.5 6C2.500 2.800 5 2 7.500 2S12.500 2.800 14.500 6C12.500 9.200 10 10 7.500 10S2.500 9.200.5 6z" stroke="#9c9c9c" stroke-width="1.200" fill="none"/><circle cx="7.500" cy="6" r="2" fill="#9c9c9c"/><path d="M1.500 11.500 13.500.5" stroke="#9c9c9c" stroke-width="1.300"/></svg>
<div class="t" style="left:1386px;top:769px;font-size:12.5px;color:#b0b0b0;font-size:12.6px">9</div>
<div class="a" style="left:0;top:867px;width:377px;height:16px;background:#4d4d4d"></div>
<svg style="left:3px;top:792px" width="9" height="8" viewBox="0 0 9 8"><path d="M0 0h8.500L4.200 8z" fill="#7e7e7e"/></svg>
<svg style="left:15px;top:790px" width="12.500" height="11.600" viewBox="0 0 14 13"><path d="M7 0l2.100 4.500 4.900.6-3.600 3.400.9 4.900L7 11l-4.300 2.400.9-4.900L0 5.100l4.900-.6z" fill="#f8b918"/></svg>
<div class="t b" style="left:32px;top:788px;font-size:12.5px;color:#dcdcdc">Favorites</div>
<svg style="left:29px;top:806px" width="12" height="12" viewBox="0 0 12 12"><circle cx="4.800" cy="4.800" r="3.800" stroke="#c4c4c4" stroke-width="1.100" fill="none"/><path d="M7.600 7.600 11.300 11.300" stroke="#c4c4c4" stroke-width="1.300"/></svg>
<div class="t" style="left:45px;top:804px;font-size:12.5px;">All Materials</div>
<svg style="left:29px;top:822px" width="12" height="12" viewBox="0 0 12 12"><circle cx="4.800" cy="4.800" r="3.800" stroke="#c4c4c4" stroke-width="1.100" fill="none"/><path d="M7.600 7.600 11.300 11.300" stroke="#c4c4c4" stroke-width="1.300"/></svg>
<div class="t" style="left:45px;top:820px;font-size:12.5px;">All Models</div>
<svg style="left:29px;top:838px" width="12" height="12" viewBox="0 0 12 12"><circle cx="4.800" cy="4.800" r="3.800" stroke="#c4c4c4" stroke-width="1.100" fill="none"/><path d="M7.600 7.600 11.300 11.300" stroke="#c4c4c4" stroke-width="1.300"/></svg>
<div class="t" style="left:45px;top:836px;font-size:12.5px;">All Prefabs</div>
<svg style="left:3px;top:871px" width="9" height="8" viewBox="0 0 9 8"><path d="M0 0h8.500L4.200 8z" fill="#7e7e7e"/></svg>
<svg style="left:14px;top:869.500px" width="15" height="11" viewBox="0 0 15 11"><path d="M0 1.200A1.200 1.200 0 0 1 1.200 0h3.300l1.500 1.800h5.500A1.200 1.200 0 0 1 12.700 3v1H3.500L1 10.800 0 9.800z" fill="#c4c4c4"/><path d="M3.800 4.800H15L12.500 11H1.300z" fill="#c4c4c4"/></svg>
<div class="t b" style="left:32px;top:867px;font-size:12.5px;color:#dcdcdc">Assets</div>
<svg style="left:15.5px;top:886.5px" width="8" height="9" viewBox="0 0 8 9"><path d="M0 0v8.500L7.500 4.200z" fill="#6c6c6c"/></svg>
<svg style="left:29px;top:885.5px" width="13" height="11" viewBox="0 0 13 11"><path d="M0 1.200A1.200 1.200 0 0 1 1.200 0h3.300l1.500 1.800h5.800A1.200 1.200 0 0 1 13 3v6.800A1.200 1.200 0 0 1 11.800 11H1.200A1.200 1.200 0 0 1 0 9.800z" fill="#c4c4c4"/></svg>
<div class="t" style="left:45px;top:883px;font-size:12.5px;">LOD</div>
<svg style="left:29px;top:901.5px" width="13" height="11" viewBox="0 0 13 11"><path d="M0 1.200A1.200 1.200 0 0 1 1.200 0h3.300l1.500 1.800h5.800A1.200 1.200 0 0 1 13 3v6.800A1.200 1.200 0 0 1 11.800 11H1.200A1.200 1.200 0 0 1 0 9.800z" fill="#c4c4c4"/></svg>
<div class="t" style="left:45px;top:899px;font-size:12.5px;">Scenes</div>
<svg style="left:29px;top:917.5px" width="13" height="11" viewBox="0 0 13 11"><path d="M0 1.200A1.200 1.200 0 0 1 1.200 0h3.300l1.500 1.800h5.800A1.200 1.200 0 0 1 13 3v6.800A1.200 1.200 0 0 1 11.800 11H1.200A1.200 1.200 0 0 1 0 9.800z" fill="#c4c4c4"/></svg>
<div class="t" style="left:45px;top:915px;font-size:12.5px;">Simplygon</div>
<svg style="left:2.5px;top:934.5px" width="8" height="9" viewBox="0 0 8 9"><path d="M0 0v8.500L7.500 4.200z" fill="#6c6c6c"/></svg>
<svg style="left:15px;top:933.5px" width="13" height="11" viewBox="0 0 13 11"><path d="M0 1.200A1.200 1.200 0 0 1 1.200 0h3.300l1.500 1.800h5.800A1.200 1.200 0 0 1 13 3v6.800A1.200 1.200 0 0 1 11.800 11H1.200A1.200 1.200 0 0 1 0 9.800z" fill="#c4c4c4"/></svg>
<div class="t b" style="left:32px;top:931px;font-size:12.5px;color:#dcdcdc">Packages</div>
<div class="a" style="left:377px;top:788px;width:1px;height:229px;background:#232323"></div>
<div class="a" style="left:378px;top:788px;width:1021px;height:20px;background:#3e3e3e"></div>
<div class="a" style="left:378px;top:808px;width:1021px;height:1px;background:#2a2a2a"></div>
<div class="a" style="left:378px;top:809px;width:1021px;height:187px;background:#333333"></div>
<div class="a" style="left:378px;top:996px;width:1021px;height:1px;background:#2a2a2a"></div>
<div class="a" style="left:378px;top:997px;width:1021px;height:20px;background:#404040"></div>
<div class="t b" style="left:382px;top:789.5px;font-size:12.5px;color:#c8c8c8">Assets</div>
<svg style="left:401px;top:831px" width="48" height="40" viewBox="0 0 48 40"><path d="M0 4a4 4 0 0 1 4-4h13.500c2.500 0 3.500 1.300 4.500 3.500 1.200 2.700 2.300 4 5.500 4H44a4 4 0 0 1 4 4V36a4 4 0 0 1-4 4H4a4 4 0 0 1-4-4z" fill="#c2c2c2"/></svg>
<div class="t" style="left:383.5px;top:883.300px;width:80px;text-align:center;font-size:10.400px;color:#c8c8c8">LOD</div>
<svg style="left:477px;top:831px" width="48" height="40" viewBox="0 0 48 40"><path d="M0 4a4 4 0 0 1 4-4h13.500c2.500 0 3.500 1.300 4.500 3.500 1.200 2.700 2.300 4 5.500 4H44a4 4 0 0 1 4 4V36a4 4 0 0 1-4 4H4a4 4 0 0 1-4-4z" fill="#c2c2c2"/></svg>
<div class="t" style="left:459.5px;top:883.300px;width:80px;text-align:center;font-size:10.400px;color:#c8c8c8">Scenes</div>
<svg style="left:553px;top:831px" width="48" height="40" viewBox="0 0 48 40"><path d="M0 4a4 4 0 0 1 4-4h13.500c2.500 0 3.500 1.300 4.500 3.500 1.200 2.700 2.300 4 5.500 4H44a4 4 0 0 1 4 4V36a4 4 0 0 1-4 4H4a4 4 0 0 1-4-4z" fill="#c2c2c2"/></svg>
<div class="t" style="left:535.5px;top:883.300px;width:80px;text-align:center;font-size:10.400px;color:#c8c8c8">Simplygon</div>
<div class="a" style="left:1328px;top:1006px;width:55px;height:2px;background:#6a6a6a;border-radius:1px"></div>
<div class="a" style="left:1355px;top:1002px;width:10px;height:10px;background:#a2a2a2;border-radius:5px"></div>
<div class="a" style="left:0;top:1017px;width:1918px;height:3px;background:#191919;z-index:5"></div>
<!-- ===== INSPECTOR ===== -->
<div class="a" id="insp" style="left:1401px;top:72px;width:517px;height:948px;background:#383838"></div>
<div class="a" style="left:1401px;top:72px;width:517px;height:19px;background:#282828"></div>
<div class="a" style="left:1401px;top:72px;width:93px;height:19px;background:#3c3c3c;border-top:2px solid #3a79bb"></div>
<svg style="left:1410px;top:77px" width="10" height="10" viewBox="0 0 10 10"><circle cx="5" cy="5" r="5" fill="#d2d2d2"/><rect x="4.200" y="4.200" width="1.700" height="3.800" fill="#3c3c3c"/><circle cx="5" cy="2.700" r="1" fill="#3c3c3c"/></svg>
<div class="t" style="left:1425px;top:74.5px;font-size:12.5px;font-size:12.6px">Inspector</div>
<div class="t" style="left:1502px;top:74.5px;font-size:12.5px;font-size:12.6px">Simplygon</div>
<svg style="left:1883px;top:76px" width="9" height="11" viewBox="0 0 9 11"><rect x=".5" y="5.500" width="7.500" height="4.500" fill="none" stroke="#d2d2d2" stroke-width="1.200"/><path d="M2 5.500V3.300a2.300 2.300 0 0 1 4.600 0v.7" stroke="#d2d2d2" stroke-width="1.200" fill="none"/></svg>
<svg style="left:1901px;top:76px" width="4" height="12" viewBox="0 0 4 12"><circle cx="2" cy="2" r="1.200" fill="#c8c8c8"/><circle cx="2" cy="6" r="1.200" fill="#c8c8c8"/><circle cx="2" cy="10" r="1.200" fill="#c8c8c8"/></svg>
<svg style="left:1408px;top:100px" width="28" height="28" viewBox="0 0 28 28"><path d="M10.500 1 20 5.500v11L10.500 22 1 16.500V5.500zM1 5.500l9.500 5L20 5.500M10.500 10.500V22" stroke="#c4c4c4" stroke-width="1.300" fill="none" stroke-linejoin="round"/><path d="M20 22.500h6l-3 3.500z" fill="#c4c4c4"/></svg>
<div class="ck" style="left:1447px;top:102px"></div>
<svg style="left:1449px;top:105px" width="10" height="8" viewBox="0 0 10 8"><path d="M1 4 3.800 6.800 9 1.200" stroke="#e4e4e4" stroke-width="1.600" fill="none"/></svg>
<div class="fld" style="left:1467px;top:100px;width:379px;height:18px;"></div>
<div class="t b" style="left:1471px;top:102px;font-size:12.5px;color:#e4e4e4;font-size:12.2px">Camera</div>
<div class="ck" style="left:1850px;top:102px"></div>
<div class="t" style="left:1868.5px;top:101.5px;font-size:12.5px;color:#c4c4c4">Static</div>
<svg style="left:1903px;top:107px" width="8" height="5" viewBox="0 0 8 5"><path d="M0 0h8L4 4.500z" fill="#c4c4c4"/></svg>
<div class="t" style="left:1443.5px;top:125.5px;font-size:12.5px;color:#c4c4c4">Tag</div>
<div class="dd" style="left:1469px;top:124px;width:203px;height:17px"></div>
<div class="t" style="left:1474px;top:124.6px;font-size:12.5px;">Untagged</div>
<div class="t" style="left:1684px;top:125.5px;font-size:12.5px;color:#c4c4c4">Layer</div>
<div class="dd" style="left:1720px;top:124px;width:193px;height:17px"></div>
<div class="t" style="left:1725px;top:124.6px;font-size:12.5px;">Default</div>
<div class="a" style="left:1401px;top:150px;width:517px;height:1px;background:#1a1a1a"></div>
<div class="a" style="left:1401px;top:151px;width:517px;height:21px;background:#3e3e3e"></div>
<div class="a" style="left:1401px;top:172px;width:517px;height:1px;background:#303030"></div>
<svg style="left:1407px;top:157.5px" width="9" height="8" viewBox="0 0 9 8"><path d="M0 0h8.500L4.200 8z" fill="#7e7e7e"/></svg>
<svg style="left:1423px;top:155px" width="14" height="14" viewBox="0 0 14 14"><path d="M7 1v6" stroke="#a4e040" stroke-width="2.200" stroke-linecap="round"/><path d="M7 7.500 2 10.500" stroke="#4fc3f7" stroke-width="2.200" stroke-linecap="round"/><path d="M7 7.500 12 10.500" stroke="#f0643c" stroke-width="2.200" stroke-linecap="round"/></svg>
<div class="t b" style="left:1461.5px;top:153.5px;font-size:12.5px;color:#e4e4e4;letter-spacing:0px">Transform</div>
<svg style="left:1858px;top:156.0px" width="11" height="11" viewBox="0 0 11 11"><circle cx="5.500" cy="5.500" r="5.300" fill="#c8c8c8"/><path d="M3.700 4.300a1.900 1.900 0 1 1 2.700 1.700c-.7.300-.9.600-.9 1.300" stroke="#3e3e3e" stroke-width="1.400" fill="none"/><circle cx="5.500" cy="8.800" r=".85" fill="#3e3e3e"/></svg>
<svg style="left:1878px;top:156.0px" width="11" height="11" viewBox="0 0 11 11"><path d="M0 2.500h6M8.500 2.500H11M0 8.500h2.500M5 8.500h6" stroke="#c8c8c8" stroke-width="1.300"/><path d="M7.200 0v5M3.800 6v5" stroke="#c8c8c8" stroke-width="1.500"/></svg>
<svg style="left:1902px;top:155.5px" width="4" height="12" viewBox="0 0 4 12"><circle cx="2" cy="2" r="1.200" fill="#c8c8c8"/><circle cx="2" cy="6" r="1.200" fill="#c8c8c8"/><circle cx="2" cy="10" r="1.200" fill="#c8c8c8"/></svg>
<div class="t" style="left:1420px;top:177.5px;font-size:12.5px;color:#c4c4c4">Position</div>
<div class="t" style="left:1615px;top:177.5px;font-size:12.5px;color:#c4c4c4">X</div>
<div class="fld" style="left:1626px;top:176px;width:85px;height:18px;"></div>
<div class="t" style="left:1629px;top:177.5px;font-size:12.5px;">10</div>
<div class="t" style="left:1716px;top:177.5px;font-size:12.5px;color:#c4c4c4">Y</div>
<div class="fld" style="left:1727px;top:176px;width:85px;height:18px;"></div>
<div class="t" style="left:1730px;top:177.5px;font-size:12.5px;">0</div>
<div class="t" style="left:1817px;top:177.5px;font-size:12.5px;color:#c4c4c4">Z</div>
<div class="fld" style="left:1828px;top:176px;width:84px;height:18px;"></div>
<div class="t" style="left:1831px;top:177.5px;font-size:12.5px;">0</div>
<div class="t" style="left:1420px;top:199.5px;font-size:12.5px;color:#c4c4c4">Rotation</div>
<div class="t" style="left:1615px;top:199.5px;font-size:12.5px;color:#c4c4c4">X</div>
<div class="fld" style="left:1626px;top:198px;width:85px;height:18px;"></div>
<div class="t" style="left:1629px;top:199.5px;font-size:12.5px;">0</div>
<div class="t" style="left:1716px;top:199.5px;font-size:12.5px;color:#7baefa">Y</div>
<div class="fld" style="left:1727px;top:198px;width:85px;height:18px;border:1px solid #3a79bb;box-shadow:0 0 0 0.5px #3a79bb"></div>
<div class="t" style="left:1730px;top:199.5px;font-size:12.5px;letter-spacing:.9px">-90</div>
<div class="a" style="left:1751px;top:201px;width:1px;height:13px;background:#d2d2d2"></div>
<div class="t" style="left:1817px;top:199.5px;font-size:12.5px;color:#c4c4c4">Z</div>
<div class="fld" style="left:1828px;top:198px;width:84px;height:18px;"></div>
<div class="t" style="left:1831px;top:199.5px;font-size:12.5px;">0</div>
<div class="t" style="left:1420px;top:219.5px;font-size:12.5px;color:#c4c4c4">Scale</div>
<div class="t" style="left:1615px;top:219.5px;font-size:12.5px;color:#c4c4c4">X</div>
<div class="fld" style="left:1626px;top:218px;width:85px;height:18px;"></div>
<div class="t" style="left:1629px;top:219.5px;font-size:12.5px;">1</div>
<div class="t" style="left:1716px;top:219.5px;font-size:12.5px;color:#c4c4c4">Y</div>
<div class="fld" style="left:1727px;top:218px;width:85px;height:18px;"></div>
<div class="t" style="left:1730px;top:219.5px;font-size:12.5px;">1</div>
<div class="t" style="left:1817px;top:219.5px;font-size:12.5px;color:#c4c4c4">Z</div>
<div class="fld" style="left:1828px;top:218px;width:84px;height:18px;"></div>
<div class="t" style="left:1831px;top:219.5px;font-size:12.5px;">1</div>
<div class="a" style="left:1401px;top:245px;width:517px;height:1px;background:#1a1a1a"></div>
<div class="a" style="left:1401px;top:246px;width:517px;height:21px;background:#3e3e3e"></div>
<div class="a" style="left:1401px;top:267px;width:517px;height:1px;background:#303030"></div>
<svg style="left:1407px;top:252.5px" width="9" height="8" viewBox="0 0 9 8"><path d="M0 0h8.500L4.200 8z" fill="#7e7e7e"/></svg>
<svg style="left:1423px;top:251px" width="13" height="10" viewBox="0 0 13 10"><rect x="0" y="0" width="8.500" height="10" rx="1" fill="#7fd6fd"/><path d="M9.500 3.500 13 .8v8.400L9.500 6.500z" fill="#7fd6fd"/></svg>
<div class="ck" style="left:1441px;top:250px"></div>
<svg style="left:1443px;top:253px" width="10" height="8" viewBox="0 0 10 8"><path d="M1 4 3.800 6.800 9 1.200" stroke="#e4e4e4" stroke-width="1.600" fill="none"/></svg>
<div class="t b" style="left:1461.5px;top:248.5px;font-size:12.5px;color:#e4e4e4;letter-spacing:0px">Camera</div>
<svg style="left:1858px;top:251.0px" width="11" height="11" viewBox="0 0 11 11"><circle cx="5.500" cy="5.500" r="5.300" fill="#c8c8c8"/><path d="M3.700 4.300a1.900 1.900 0 1 1 2.700 1.700c-.7.300-.9.600-.9 1.300" stroke="#3e3e3e" stroke-width="1.400" fill="none"/><circle cx="5.500" cy="8.800" r=".85" fill="#3e3e3e"/></svg>
<svg style="left:1878px;top:251.0px" width="11" height="11" viewBox="0 0 11 11"><path d="M0 2.500h6M8.500 2.500H11M0 8.500h2.500M5 8.500h6" stroke="#c8c8c8" stroke-width="1.300"/><path d="M7.200 0v5M3.800 6v5" stroke="#c8c8c8" stroke-width="1.500"/></svg>
<svg style="left:1902px;top:250.5px" width="4" height="12" viewBox="0 0 4 12"><circle cx="2" cy="2" r="1.200" fill="#c8c8c8"/><circle cx="2" cy="6" r="1.200" fill="#c8c8c8"/><circle cx="2" cy="10" r="1.200" fill="#c8c8c8"/></svg>
<div class="t" style="left:1420px;top:273px;font-size:12.5px;color:#c4c4c4;letter-spacing:0px">Clear Flags</div>
<div class="dd" style="left:1613px;top:271px;width:300px;height:18px"></div>
<div class="t" style="left:1618px;top:271.6px;font-size:12.5px;">Skybox</div>
<div class="t" style="left:1420px;top:293px;font-size:12.5px;color:#c4c4c4;letter-spacing:0px">Background</div>
<div class="a" style="left:1614px;top:292px;width:280px;height:16px;background:#314d79;border-bottom:3px solid #000;border-radius:2px 0 0 2px"></div>
<div class="a" style="left:1894px;top:292px;width:18px;height:16px;background:#515151;border-radius:0 2px 2px 0"></div>
<svg style="left:1897px;top:294px" width="12" height="12" viewBox="0 0 12 12"><path d="M1 11 1.500 8.500 6.500 3.500 8.500 5.500 3.500 10.500z" fill="#d2d2d2"/><path d="M6 2 10 6M7.500 3.500 9.500 1.200a1.300 1.300 0 0 1 1.800 1.800L9 5z" stroke="#d2d2d2" stroke-width="1.300" fill="#d2d2d2"/></svg>
<div class="t" style="left:1420px;top:313px;font-size:12.5px;color:#c4c4c4;letter-spacing:0px">Culling Mask</div>
<div class="dd" style="left:1613px;top:311px;width:300px;height:18px"></div>
<div class="t" style="left:1618px;top:311.6px;font-size:12.5px;">Everything</div>
<div class="t" style="left:1420px;top:341px;font-size:12.5px;color:#c4c4c4;letter-spacing:0px">Projection</div>
<div class="dd" style="left:1613px;top:339px;width:300px;height:18px"></div>
<div class="t" style="left:1618px;top:339.6px;font-size:12.5px;">Perspective</div>
<div class="t" style="left:1420px;top:361px;font-size:12.5px;color:#c4c4c4;letter-spacing:0px">FOV Axis</div>
<div class="dd" style="left:1613px;top:359px;width:300px;height:18px"></div>
<div class="t" style="left:1618px;top:359.6px;font-size:12.5px;">Vertical</div>
<div class="t" style="left:1420px;top:381px;font-size:12.5px;color:#c4c4c4;letter-spacing:0px">Field of View</div>
<div class="a" style="left:1614px;top:387.500px;width:244px;height:2px;background:#5e5e5e;border-radius:1px"></div>
<div class="a" style="left:1692px;top:383.500px;width:10px;height:10px;background:#999;border-radius:5px"></div>
<div class="fld" style="left:1863px;top:380px;width:49px;height:18px;"></div>
<div class="t" style="left:1866px;top:380.6px;font-size:12.5px;">60</div>
<div class="t" style="left:1420px;top:401px;font-size:12.5px;color:#c4c4c4;letter-spacing:0px">Physical Camera</div>
<div class="ck" style="left:1614px;top:401px"></div>
<div class="t" style="left:1420px;top:429px;font-size:12.5px;color:#c4c4c4;letter-spacing:0px">Clipping Planes</div>
<div class="t" style="left:1615px;top:429px;font-size:12.5px;color:#c4c4c4">Near</div>
<div class="fld" style="left:1651px;top:428px;width:261px;height:18px;"></div>
<div class="t" style="left:1654px;top:428.6px;font-size:12.5px;">0.3</div>
<div class="t" style="left:1615px;top:449px;font-size:12.5px;color:#c4c4c4">Far</div>
<div class="fld" style="left:1651px;top:448px;width:261px;height:18px;"></div>
<div class="t" style="left:1654px;top:448.6px;font-size:12.5px;">1000</div>
<div class="t" style="left:1420px;top:469px;font-size:12.5px;color:#c4c4c4;letter-spacing:0px">Viewport Rect</div>
<div class="t" style="left:1619px;top:469px;font-size:12.5px;color:#c4c4c4">X</div>
<div class="fld" style="left:1629px;top:468px;width:82px;height:18px;"></div>
<div class="t" style="left:1632px;top:468.6px;font-size:12.5px;">0</div>
<div class="t" style="left:1720.5px;top:469px;font-size:12.5px;color:#c4c4c4">Y</div>
<div class="fld" style="left:1730px;top:468px;width:82px;height:18px;"></div>
<div class="t" style="left:1733px;top:468.6px;font-size:12.5px;">0</div>
<div class="t" style="left:1616px;top:489px;font-size:12.5px;color:#c4c4c4">W</div>
<div class="fld" style="left:1629px;top:488px;width:82px;height:18px;"></div>
<div class="t" style="left:1632px;top:488.6px;font-size:12.5px;">1</div>
<div class="t" style="left:1719.5px;top:489px;font-size:12.5px;color:#c4c4c4">H</div>
<div class="fld" style="left:1730px;top:488px;width:82px;height:18px;"></div>
<div class="t" style="left:1733px;top:488.6px;font-size:12.5px;">1</div>
<div class="t" style="left:1420px;top:519px;font-size:12.5px;color:#c4c4c4;letter-spacing:0px">Depth</div>
<div class="fld" style="left:1614px;top:518px;width:298px;height:18px;"></div>
<div class="t" style="left:1617px;top:518.6px;font-size:12.5px;">0</div>
<div class="t" style="left:1420px;top:539px;font-size:12.5px;color:#c4c4c4;letter-spacing:0px">Rendering Path</div>
<div class="dd" style="left:1613px;top:537px;width:300px;height:18px"></div>
<div class="t" style="left:1618px;top:537.6px;font-size:12.5px;">Use Graphics Settings</div>
<div class="t" style="left:1420px;top:559px;font-size:12.5px;color:#c4c4c4;letter-spacing:0.3px">Target Texture</div>
<div class="fld" style="left:1614px;top:558px;width:298px;height:18px;"></div>
<div class="t" style="left:1617px;top:558.6px;font-size:12.5px;">None (Render Texture)</div>
<div class="a" style="left:1893px;top:559px;width:18px;height:16px;background:#373737;border-radius:0 2px 2px 0"></div>
<svg style="left:1897px;top:561.500px" width="11" height="11" viewBox="0 0 11 11"><circle cx="5.500" cy="5.500" r="4.600" stroke="#d2d2d2" stroke-width="1.100" fill="none"/><circle cx="5.500" cy="5.500" r="1.800" fill="#d2d2d2"/></svg>
<div class="t" style="left:1420px;top:579px;font-size:12.5px;color:#c4c4c4;letter-spacing:0.1px">Occlusion Culling</div>
<div class="ck" style="left:1614px;top:579px"></div>
<svg style="left:1616px;top:582px" width="10" height="8" viewBox="0 0 10 8"><path d="M1 4 3.800 6.800 9 1.200" stroke="#e4e4e4" stroke-width="1.600" fill="none"/></svg>
<div class="t" style="left:1420px;top:599px;font-size:12.5px;color:#c4c4c4;letter-spacing:0px">HDR</div>
<div class="dd" style="left:1613px;top:597px;width:300px;height:18px"></div>
<div class="t" style="left:1618px;top:597.6px;font-size:12.5px;">Use Graphics Settings</div>
<div class="t" style="left:1420px;top:619px;font-size:12.5px;color:#c4c4c4;letter-spacing:0px">MSAA</div>
<div class="dd" style="left:1613px;top:617px;width:300px;height:18px"></div>
<div class="t" style="left:1618px;top:617.6px;font-size:12.5px;">Use Graphics Settings</div>
<div class="t" style="left:1420px;top:639px;font-size:12.5px;color:#c4c4c4;letter-spacing:0.05px">Allow Dynamic Resolution</div>
<div class="ck" style="left:1614px;top:639px"></div>
<div class="t" style="left:1420px;top:666.5px;font-size:12.5px;color:#c4c4c4;letter-spacing:0.18px">Target Display</div>
<div class="dd" style="left:1613px;top:665px;width:300px;height:18px"></div>
<div class="t" style="left:1618px;top:665.6px;font-size:12.5px;">Display 1</div>
<div class="t" style="left:1420px;top:686.5px;font-size:12.5px;color:#c4c4c4;letter-spacing:0.1px">Target Eye</div>
<div class="dd" style="left:1613px;top:685px;width:300px;height:18px"></div>
<div class="t" style="left:1618px;top:685.6px;font-size:12.5px;">Both</div>
<div class="a" style="left:1401px;top:710px;width:517px;height:1px;background:#1a1a1a"></div>
<div class="a" style="left:1401px;top:711px;width:517px;height:21px;background:#3e3e3e"></div>
<div class="a" style="left:1401px;top:732px;width:517px;height:1px;background:#303030"></div>
<svg style="left:1422px;top:714.500px" width="14" height="13" viewBox="0 0 14 13"><path d="M1.500 8V6.500a5.500 5.500 0 0 1 11 0V8" stroke="#f3b52c" stroke-width="1.600" fill="none"/><rect x=".5" y="7" width="3.300" height="5.500" rx="1" fill="#f3b52c"/><rect x="10.200" y="7" width="3.300" height="5.500" rx="1" fill="#f3b52c"/></svg>
<div class="ck" style="left:1441px;top:715px"></div>
<svg style="left:1443px;top:718px" width="10" height="8" viewBox="0 0 10 8"><path d="M1 4 3.800 6.800 9 1.200" stroke="#e4e4e4" stroke-width="1.600" fill="none"/></svg>
<div class="t b" style="left:1461.5px;top:713.5px;font-size:12.5px;color:#e4e4e4;letter-spacing:-0.22px">Audio Listener</div>
<svg style="left:1858px;top:716.0px" width="11" height="11" viewBox="0 0 11 11"><circle cx="5.500" cy="5.500" r="5.300" fill="#c8c8c8"/><path d="M3.700 4.300a1.900 1.900 0 1 1 2.700 1.700c-.7.300-.9.600-.9 1.300" stroke="#3e3e3e" stroke-width="1.400" fill="none"/><circle cx="5.500" cy="8.800" r=".85" fill="#3e3e3e"/></svg>
<svg style="left:1878px;top:716.0px" width="11" height="11" viewBox="0 0 11 11"><path d="M0 2.500h6M8.500 2.500H11M0 8.500h2.500M5 8.500h6" stroke="#c8c8c8" stroke-width="1.300"/><path d="M7.200 0v5M3.800 6v5" stroke="#c8c8c8" stroke-width="1.500"/></svg>
<svg style="left:1902px;top:715.5px" width="4" height="12" viewBox="0 0 4 12"><circle cx="2" cy="2" r="1.200" fill="#c8c8c8"/><circle cx="2" cy="6" r="1.200" fill="#c8c8c8"/><circle cx="2" cy="10" r="1.200" fill="#c8c8c8"/></svg>
<div class="a" style="left:1544px;top:741px;width:231px;height:24px;background:#585858;border:1px solid #303030;border-radius:3px"></div>
<div class="t" style="left:1544px;top:744.600px;width:229px;text-align:center;font-size:12.5px;color:#e4e4e4">Add Component</div>
<!-- dividers -->
<div class="a" style="left:295px;top:72px;width:2px;height:676px;background:#191919"></div>
<div class="a" style="left:0;top:746px;width:1401px;height:2px;background:#191919"></div>
<div class="a" style="left:1399px;top:72px;width:2px;height:948px;background:#191919"></div>
<div class="a" style="left:1917px;top:0;width:1px;height:1020px;background:#1c1c1c"></div>
<!-- ===== MENU DROPDOWN ===== -->
<div class="a" id="menu" style="left:110px;top:42px;width:275px;height:444px;background:#f2f2f2;border:1px solid #cccccc;box-shadow:2px 2px 3px rgba(0,0,0,.45)"></div>
<div class="a" style="left:113px;top:242px;width:269px;height:22px;background:#91c9f7"></div>
<div class="a" style="left:141px;top:267px;width:241px;height:1px;background:#d7d7d7"></div>
<div class="a" style="left:141px;top:296px;width:241px;height:1px;background:#d7d7d7"></div>
<div class="a" style="left:141px;top:347px;width:241px;height:1px;background:#d7d7d7"></div>
<div class="t w" style="left:145px;top:47px;font-size:11.8px;color:#000">Create Empty</div>
<div class="t w" style="right:1554px;top:47px;font-size:11.8px;color:#000;letter-spacing:.22px">Ctrl+Shift+N</div>
<div class="t w" style="left:145px;top:69px;font-size:11.8px;color:#000">Create Empty Child</div>
<div class="t w" style="right:1554px;top:69px;font-size:11.8px;color:#000;letter-spacing:.22px">Alt+Shift+N</div>
<div class="t w" style="left:145px;top:91px;font-size:11.8px;color:#000">3D Object</div>
<svg style="left:367px;top:95px" width="6" height="9" viewBox="0 0 6 9"><path d="M1 .8 4.700 4.500 1 8.200" stroke="#000" stroke-width="1.100" fill="none"/></svg>
<div class="t w" style="left:145px;top:113px;font-size:11.8px;color:#000">2D Object</div>
<svg style="left:367px;top:117px" width="6" height="9" viewBox="0 0 6 9"><path d="M1 .8 4.700 4.500 1 8.200" stroke="#000" stroke-width="1.100" fill="none"/></svg>
<div class="t w" style="left:145px;top:135px;font-size:11.8px;color:#000">Effects</div>
<svg style="left:367px;top:139px" width="6" height="9" viewBox="0 0 6 9"><path d="M1 .8 4.700 4.500 1 8.200" stroke="#000" stroke-width="1.100" fill="none"/></svg>
<div class="t w" style="left:145px;top:157px;font-size:11.8px;color:#000">Light</div>
<svg style="left:367px;top:161px" width="6" height="9" viewBox="0 0 6 9"><path d="M1 .8 4.700 4.500 1 8.200" stroke="#000" stroke-width="1.100" fill="none"/></svg>
<div class="t w" style="left:145px;top:179px;font-size:11.8px;color:#000">Audio</div>
<svg style="left:367px;top:183px" width="6" height="9" viewBox="0 0 6 9"><path d="M1 .8 4.700 4.500 1 8.200" stroke="#000" stroke-width="1.100" fill="none"/></svg>
<div class="t w" style="left:145px;top:201px;font-size:11.8px;color:#000">Video</div>
<svg style="left:367px;top:205px" width="6" height="9" viewBox="0 0 6 9"><path d="M1 .8 4.700 4.500 1 8.200" stroke="#000" stroke-width="1.100" fill="none"/></svg>
<div class="t w" style="left:145px;top:223px;font-size:11.8px;color:#000">UI</div>
<svg style="left:367px;top:227px" width="6" height="9" viewBox="0 0 6 9"><path d="M1 .8 4.700 4.500 1 8.200" stroke="#000" stroke-width="1.100" fill="none"/></svg>
<div class="t w" style="left:145px;top:245px;font-size:11.8px;color:#000">Camera</div>
<div class="t w" style="left:145px;top:274px;font-size:11.8px;color:#6d6d6d">Center On Children</div>
<div class="t w" style="left:145px;top:303px;font-size:11.8px;color:#6d6d6d">Make Parent</div>
<div class="t w" style="left:145px;top:325px;font-size:11.8px;color:#6d6d6d">Clear Parent</div>
<div class="t w" style="left:145px;top:354px;font-size:11.8px;color:#6d6d6d">Set as first sibling</div>
<div class="t w" style="right:1554px;top:354px;font-size:11.8px;color:#6d6d6d;letter-spacing:.22px">Ctrl+=</div>
<div class="t w" style="left:145px;top:376px;font-size:11.8px;color:#6d6d6d">Set as last sibling</div>
<div class="t w" style="right:1554px;top:376px;font-size:11.8px;color:#6d6d6d;letter-spacing:.22px">Ctrl+-</div>
<div class="t w" style="left:145px;top:398px;font-size:11.8px;color:#000">Move To View</div>
<div class="t w" style="right:1554px;top:398px;font-size:11.8px;color:#000;letter-spacing:.22px">Ctrl+Alt+F</div>
<div class="t w" style="left:145px;top:420px;font-size:11.8px;color:#000">Align With View</div>
<div class="t w" style="right:1554px;top:420px;font-size:11.8px;color:#000;letter-spacing:.22px">Ctrl+Shift+F</div>
<div class="t w" style="left:145px;top:442px;font-size:11.8px;color:#000">Align View to Selected</div>
<div class="t w" style="left:145px;top:464px;font-size:11.8px;color:#000">Toggle Active State</div>
<div class="t w" style="right:1554px;top:464px;font-size:11.8px;color:#000;letter-spacing:.22px">Alt+Shift+A</div>
<!-- ===== ANNOTATIONS ===== -->
<svg id="anno" width="1918" height="1020" style="left:0;top:0" fill="none" stroke="#ec1c24" stroke-linecap="round" stroke-linejoin="round">
<ellipse cx="164" cy="253.700" rx="33.600" ry="15.500" stroke-width="5.200"/>
<path d="M195 260.500 541.500 502.500" stroke-width="4.800"/>
<path d="M534.500 482 541.500 503 514.500 506.800" stroke-width="3.600"/>
<ellipse cx="1707.300" cy="207.900" rx="110.800" ry="54" stroke-width="4.400"/>
</svg>
</div>
</body>
</html>
